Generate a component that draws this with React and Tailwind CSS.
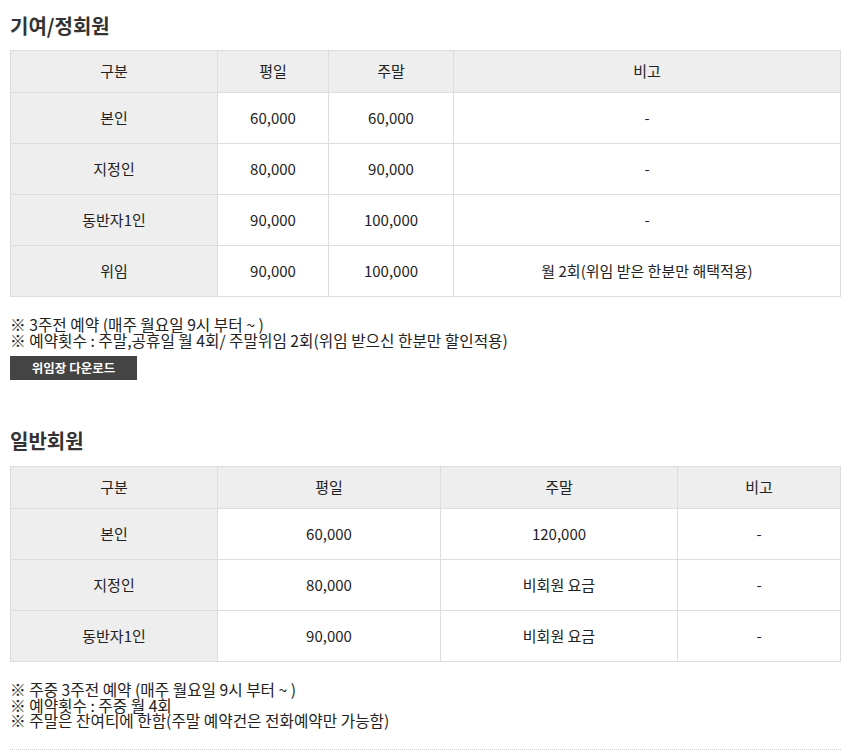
export default function App() {
  const regular = [
    ["본인", "60,000", "60,000", "-"],
    ["지정인", "80,000", "90,000", "-"],
    ["동반자1인", "90,000", "100,000", "-"],
    ["위임", "90,000", "100,000", "월 2회(위임 받은 한분만 해택적용)"],
  ];
  const normal = [
    ["본인", "60,000", "120,000", "-"],
    ["지정인", "80,000", "비회원 요금", "-"],
    ["동반자1인", "90,000", "비회원 요금", "-"],
  ];

  const th = "border border-[#dddddd] bg-[#eeeeee] font-normal h-[42px]";
  const td = "border border-[#dddddd] h-[51px]";

  return (
    <div
      className="bg-white text-[#333] px-[10px] pt-[12px] w-[865px] h-[752px] overflow-hidden"
      style={{ fontFamily: '"Noto Sans CJK KR", "Noto Sans", sans-serif' }}
    >
      <h2 className="text-[20px] font-bold leading-[28px] text-[#333] mb-[10px]">기여/정회원</h2>
      <table className="w-[831px] border-collapse text-[15px] text-center text-[#222] table-fixed">
        <colgroup>
          <col className="w-[207px]" />
          <col className="w-[111px]" />
          <col className="w-[125px]" />
          <col />
        </colgroup>
        <thead>
          <tr>
            <th className={th}>구분</th>
            <th className={th}>평일</th>
            <th className={th}>주말</th>
            <th className={th}>비고</th>
          </tr>
        </thead>
        <tbody>
          {regular.map((r) => (
            <tr key={r[0]}>
              <td className={td + " bg-[#eeeeee]"}>{r[0]}</td>
              <td className={td}>{r[1]}</td>
              <td className={td}>{r[2]}</td>
              <td className={td}>{r[3]}</td>
            </tr>
          ))}
        </tbody>
      </table>

      <div className="mt-[20px] text-[15.7px] leading-[16px] text-[#222]">
        <p>※ 3주전 예약 (매주 월요일 9시 부터 ~ )</p>
        <p>※ 예약횟수 : 주말,공휴일 월 4회/ 주말위임 2회(위임 받으신 한분만 할인적용)</p>
      </div>
      <button className="mt-[7px] w-[127px] h-[24px] bg-[#444444] text-white text-[12.5px] font-bold leading-[24px]">
        위임장 다운로드
      </button>

      <h2 className="text-[20px] font-bold leading-[28px] text-[#333] mt-[47px] mb-[11px]">일반회원</h2>
      <table className="w-[831px] border-collapse text-[15px] text-center text-[#222] table-fixed">
        <colgroup>
          <col className="w-[207px]" />
          <col className="w-[223px]" />
          <col className="w-[237px]" />
          <col />
        </colgroup>
        <thead>
          <tr>
            <th className={th}>구분</th>
            <th className={th}>평일</th>
            <th className={th}>주말</th>
            <th className={th}>비고</th>
          </tr>
        </thead>
        <tbody>
          {normal.map((r) => (
            <tr key={r[0]}>
              <td className={td + " bg-[#eeeeee]"}>{r[0]}</td>
              <td className={td}>{r[1]}</td>
              <td className={td}>{r[2]}</td>
              <td className={td}>{r[3]}</td>
            </tr>
          ))}
        </tbody>
      </table>

      <div className="mt-[20px] text-[15.7px] leading-[15.5px] text-[#222]">
        <p>※ 주중 3주전 예약 (매주 월요일 9시 부터 ~ )</p>
        <p>※ 예약횟수 : 주중 월 4회</p>
        <p>※ 주말은 잔여티에 한함(주말 예약건은 전화예약만 가능함)</p>
      </div>
      <div className="mt-[20px] w-[831px] border-t border-dotted border-[#cccccc]" />
    </div>
  );
}
